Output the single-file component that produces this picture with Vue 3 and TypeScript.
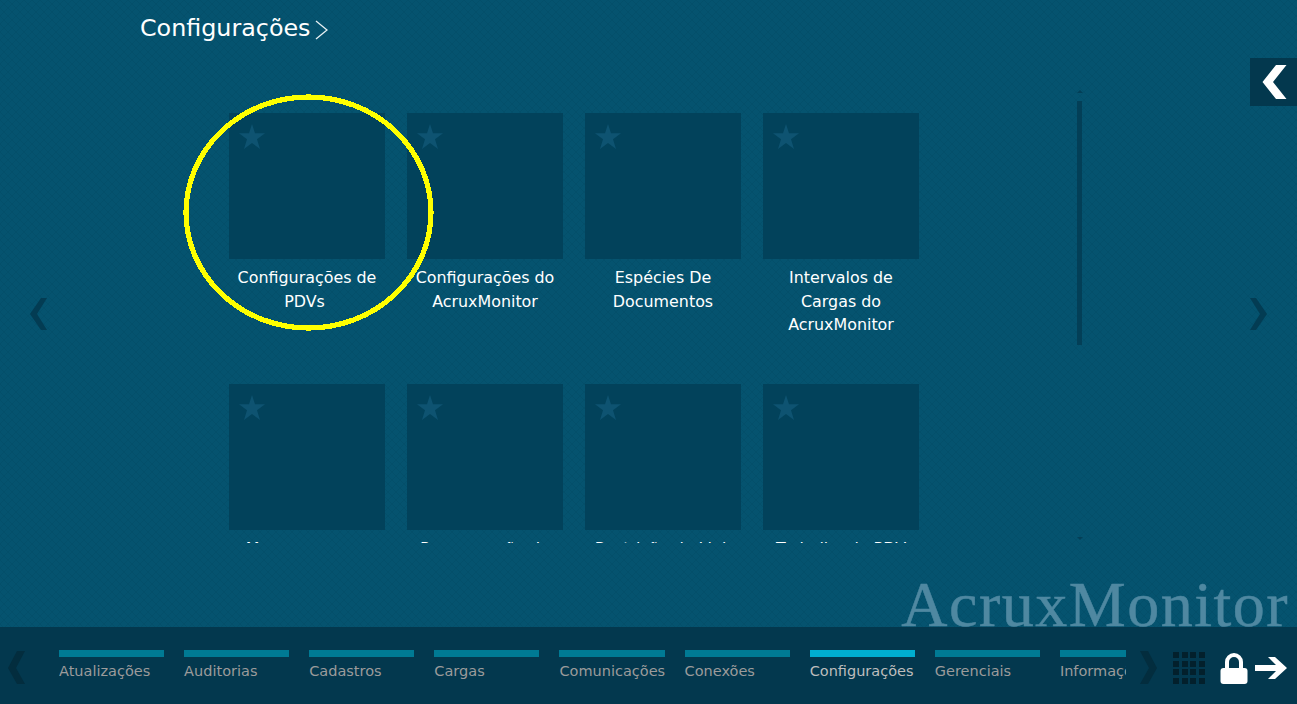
<script setup lang="ts">
interface Tile {
  label: string
}

const tiles: Tile[] = [
  { label: 'Configurações de PDVs\u00a0' },
  { label: 'Configurações do AcruxMonitor' },
  { label: 'Espécies De Documentos' },
  { label: 'Intervalos de Cargas do AcruxMonitor' },
  { label: 'Mensagens aos PDVs' },
  { label: 'Programação de Cargas' },
  { label: 'Restrição de Link' },
  { label: 'Trabalho de PDV' }
]

const groups: string[] = [
  'Atualizações',
  'Auditorias',
  'Cadastros',
  'Cargas',
  'Comunicações',
  'Conexões',
  'Configurações',
  'Gerenciais',
  'Informações'
]

const activeGroup = 'Configurações'
</script>

<template>
  <div class="screen">
    <main class="content">
      <h1 class="title">
        <span>Configurações</span>
        <svg class="title-arrow" width="13" height="20" viewBox="0 0 13 20">
          <path d="M1 1 L12 10 L1 19" fill="none" stroke="#e8f0f3" stroke-width="1.3" />
        </svg>
      </h1>

      <button class="side-toggle" type="button">
        <svg width="25" height="34" viewBox="0 0 25 34">
          <path d="M14 0 H24.5 L11 17 L24.5 34 H14 L0.5 17 Z" fill="#fff" />
        </svg>
      </button>

      <div class="body">
        <svg class="page-arrow" width="20" height="34" viewBox="0 0 20 34">
          <path d="M12 1 H18 L8 17 L18 33 H12 L1 17 Z" fill="#033c53" />
        </svg>

        <div class="viewport">
          <div class="tiles">
            <div v-for="tile in tiles" :key="tile.label" class="tile">
              <div class="tile-box">
                <svg class="star" width="26" height="25" viewBox="0 0 26 25">
                  <path d="M13 0 L16 9.3 H26 L18 15.2 L21 25 L13 19 L5 25 L8 15.2 L0 9.3 H10 Z" fill="#0e5371" />
                </svg>
              </div>
              <div class="tile-label">{{ tile.label }}</div>
            </div>
          </div>
        </div>

        <div class="scroller">
          <span class="scroll-up"></span>
          <span class="scroll-thumb"></span>
          <span class="scroll-down"></span>
        </div>

        <svg class="page-arrow page-arrow-next" width="20" height="34" viewBox="0 0 20 34">
          <path d="M8 1 H2 L12 17 L2 33 H8 L19 17 Z" fill="#033c53" />
        </svg>
      </div>

      <svg class="highlight" width="253" height="239" viewBox="0 0 253 239" shape-rendering="crispEdges">
        <ellipse cx="126.5" cy="119.5" rx="122.5" ry="115.5" fill="none" stroke="#ffff00" stroke-width="5.2" />
      </svg>

      <div class="watermark">AcruxMonitor</div>
    </main>

    <footer class="taskbar">
      <svg class="bar-arrow" width="18" height="34" viewBox="0 0 18 34">
        <path d="M9 0 H17 L8 17 L17 33 H9 L0 17 Z" fill="#032d3e" />
      </svg>
      <nav class="groups">
        <div v-for="group in groups" :key="group" class="group" :class="{ active: group === activeGroup }">
          <div class="group-bar"></div>
          <div class="group-name">{{ group }}</div>
        </div>
      </nav>
      <div class="bar-tools">
        <svg class="tool-next" width="18" height="34" viewBox="0 0 18 34">
          <path d="M8 0 H0 L9 17 L0 33 H8 L17 17 Z" fill="#032d3e" />
        </svg>
        <div class="grid-icon">
          <span v-for="n in 16" :key="n"></span>
        </div>
        <svg class="tool-lock" width="28" height="31" viewBox="0 0 28 31">
          <path d="M7 17 V9 A7 7 0 0 1 21 9 V17" fill="none" stroke="#fff" stroke-width="4" />
          <rect x="0.5" y="15" width="27" height="16" rx="3" fill="#fff" />
        </svg>
        <svg class="tool-arrow" width="33" height="22" viewBox="0 0 33 22">
          <path d="M13 0 H20 L32 11 L20 22 H13 L21 14 H0 V8 H21 Z" fill="#fff" />
        </svg>
      </div>
    </footer>
  </div>
</template>

<style>
body {
  margin: 0;
  overflow: hidden;
}
</style>

<style scoped>
.screen {
  width: 1297px;
  height: 704px;
  display: flex;
  flex-direction: column;
  overflow: hidden;
  font-family: "DejaVu Sans", sans-serif;
  background-color: #05536f;
  background-image:
    linear-gradient(45deg, transparent 46%, rgba(0, 40, 60, 0.1) 46% 54%, transparent 54%),
    linear-gradient(-45deg, transparent 46%, rgba(0, 40, 60, 0.1) 46% 54%, transparent 54%);
  background-size: 8px 8px;
}

.content {
  position: relative;
  flex: 1;
  min-height: 0;
}

.title {
  display: flex;
  align-items: center;
  gap: 5px;
  height: 55px;
  margin: 0;
  padding-left: 140px;
  font-size: 23.8px;
  font-weight: 400;
  color: #fff;
}

.title-arrow {
  margin-top: 5px;
}

.side-toggle {
  position: absolute;
  top: 58px;
  right: 0;
  width: 47px;
  height: 48px;
  padding: 0 0 0 1px;
  display: flex;
  align-items: center;
  justify-content: center;
  border: 0;
  background: #03384e;
}

.body {
  display: flex;
  align-items: flex-start;
  height: 500px;
  padding-left: 29px;
}

.page-arrow {
  flex: none;
  margin-top: 242px;
}

.page-arrow-next {
  margin-left: 165px;
}

.viewport {
  flex: none;
  width: 1000px;
  height: 488px;
  margin-left: -49px;
  padding-left: 229px;
  box-sizing: border-box;
  overflow: hidden;
}

.tiles {
  display: grid;
  grid-template-columns: repeat(4, 156px);
  grid-auto-rows: 271px;
  column-gap: 22px;
  padding-top: 58px;
}

.tile-box {
  position: relative;
  height: 146px;
  background: #02425b;
}

.star {
  position: absolute;
  top: 11px;
  left: 10px;
}

.tile-label {
  padding-top: 7px;
  font-size: 15.9px;
  line-height: 23.5px;
  text-align: center;
  color: #fff;
}

.highlight {
  position: absolute;
  top: 93px;
  left: 182px;
}

.scroller {
  position: relative;
  flex: none;
  width: 6px;
  height: 489px;
  margin-left: 77px;
}

.scroll-thumb {
  position: absolute;
  top: 46px;
  left: 0;
  width: 5px;
  height: 244px;
  background: #033f57;
}

.scroll-up,
.scroll-down {
  position: absolute;
  left: 0;
  width: 0;
  height: 0;
  border-left: 3px solid transparent;
  border-right: 3px solid transparent;
}

.scroll-up {
  top: 35px;
  border-bottom: 3px solid #033f57;
}

.scroll-down {
  top: 482px;
  border-top: 3px solid #033f57;
}

.watermark {
  position: absolute;
  right: 8px;
  bottom: -14px;
  font-family: "Liberation Serif", serif;
  font-size: 64px;
  line-height: 72px;
  letter-spacing: 1.5px;
  color: #4f88a1;
  -webkit-text-stroke: 0.5px #4f88a1;
}

.taskbar {
  position: relative;
  z-index: 1;
  flex: none;
  height: 77px;
  display: flex;
  align-items: flex-start;
  padding-left: 8px;
  background: #03384e;
}

.bar-arrow {
  flex: none;
  margin-top: 24px;
}

.groups {
  flex: none;
  width: 1067px;
  margin-left: 33px;
  padding-top: 23px;
  display: flex;
  gap: 20px;
  overflow: hidden;
}

.group {
  flex: none;
  width: 105.12px;
}

.group-bar {
  height: 7px;
  background: #007a94;
}

.group.active .group-bar {
  background: #00aed0;
}

.group-name {
  padding-top: 5px;
  font-size: 14.5px;
  line-height: 18px;
  white-space: nowrap;
  color: #9b9b9b;
}

.group.active .group-name {
  color: #bdbdbd;
}

.bar-tools {
  flex: none;
  display: flex;
  align-items: center;
  height: 34px;
  margin-top: 24px;
  margin-left: 14px;
}

.grid-icon {
  display: grid;
  grid-template-columns: repeat(4, 6px);
  grid-auto-rows: 6px;
  gap: 2.5px;
  margin-left: 15px;
}

.grid-icon span {
  background: #03202c;
}

.tool-lock {
  margin-left: 15px;
}

.tool-arrow {
  margin-left: 7px;
}
</style>
